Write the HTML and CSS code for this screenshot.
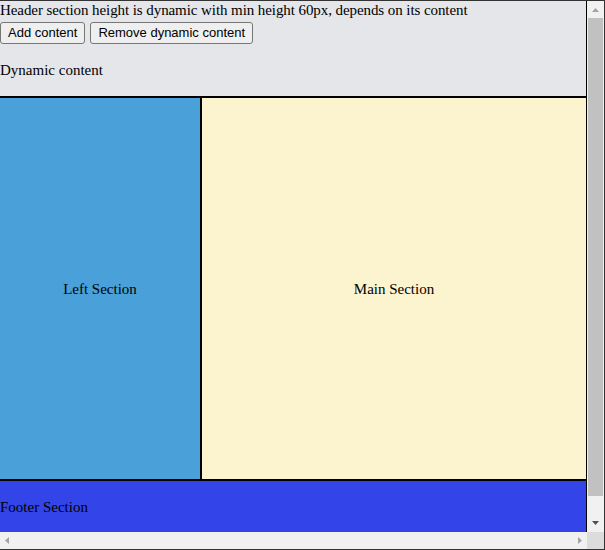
FILE: index.html
```html
<!DOCTYPE html>
<html lang="en">
<head>
<meta charset="utf-8">
<title>Layout</title>
<link rel="stylesheet" href="styles.css">
</head>
<body>
<div class="window">
  <div class="viewport">
    <div class="page">
      <header class="header">
        <div class="header-title">Header section height is dynamic with min height 60px, depends on its content</div>
        <div class="header-actions">
          <button class="btn" type="button">Add content</button>
          <button class="btn" type="button">Remove dynamic content</button>
        </div>
        <p class="dynamic">Dynamic content</p>
      </header>
      <div class="middle">
        <aside class="left">Left Section</aside>
        <main class="main">Main Section</main>
      </div>
      <footer class="footer">
        <p class="footer-text">Footer Section</p>
      </footer>
    </div>
  </div>
  <div class="vscroll">
    <div class="sb-btn"><svg width="17" height="17" viewBox="0 0 17 17"><polygon points="5,11 12,11 8.5,7" fill="#a3a3a3"/></svg></div>
    <div class="vtrack"><div class="vthumb"></div></div>
    <div class="sb-btn"><svg width="17" height="17" viewBox="0 0 17 17"><polygon points="5,6 12,6 8.5,10" fill="#505050"/></svg></div>
  </div>
  <div class="hscroll">
    <div class="sb-btn"><svg width="17" height="17" viewBox="0 0 17 17"><polygon points="9,5 9,12 5,8.5" fill="#a3a3a3"/></svg></div>
    <div class="htrack"></div>
    <div class="sb-btn"><svg width="17" height="17" viewBox="0 0 17 17"><polygon points="8,5 8,12 12,8.5" fill="#a3a3a3"/></svg></div>
  </div>
  <div class="corner"></div>
</div>
</body>
</html>
```
FILE: styles.css
```css
html, body {
  margin: 0;
  padding: 0;
  background: #ffffff;
}

body {
  font-family: "Liberation Serif", "Times New Roman", serif;
  font-size: 15px;
  line-height: 18px;
  color: #000;
}

.window {
  box-sizing: border-box;
  width: 605px;
  height: 550px;
  border-style: solid;
  border-color: #333333;
  border-width: 1px 1px 1px 0;
  display: grid;
  grid-template-columns: 587px 17px;
  grid-template-rows: 531px 17px;
}

.viewport {
  overflow: hidden;
}

.vscroll {
  display: flex;
  flex-direction: column;
  background: #f1f1f1;
}

.hscroll {
  display: flex;
  background: #f1f1f1;
}

.sb-btn {
  width: 17px;
  height: 17px;
  flex: none;
}

.sb-btn svg {
  display: block;
}

.vtrack {
  flex: 1;
  padding: 0 1px;
}

.vthumb {
  height: 478px;
  background: #c1c1c1;
}

.htrack {
  flex: 1;
}

.corner {
  background: #dcdcdc;
}

.page {
  display: flex;
  flex-direction: column;
  width: 587px;
}

.header {
  min-height: 60px;
  background: #e5e6e9;
  border-right: 1px solid #000;
  border-bottom: 1px solid #000;
}

.header-title {
  letter-spacing: -0.08px;
}

.header-actions {
  display: flex;
  gap: 5px;
  padding-top: 3px;
}

.btn {
  font-family: "Liberation Sans", Arial, sans-serif;
  font-size: 13px;
  line-height: 18px;
  color: #000;
  background: #efefef;
  border: 1px solid #767676;
  border-radius: 3px;
  padding: 1px 7px;
  height: 22px;
}

.dynamic {
  margin: 17px 0;
}

.middle {
  display: flex;
  height: 383px;
}

.left {
  width: 200px;
  flex: none;
  background: #4aa0d8;
  border-top: 1px solid #000;
  border-right: 1px solid #000;
  border-bottom: 1px solid #000;
  display: flex;
  align-items: center;
  justify-content: center;
}

.main {
  flex: 1;
  background: #fcf3cf;
  border: 1px solid #000;
  display: flex;
  align-items: center;
  justify-content: center;
}

.footer {
  background: #3345e8;
  border-top: 1px solid #000;
  border-right: 1px solid #000;
  min-height: 72px;
}

.footer-text {
  margin: 17px 0 0;
}
```
